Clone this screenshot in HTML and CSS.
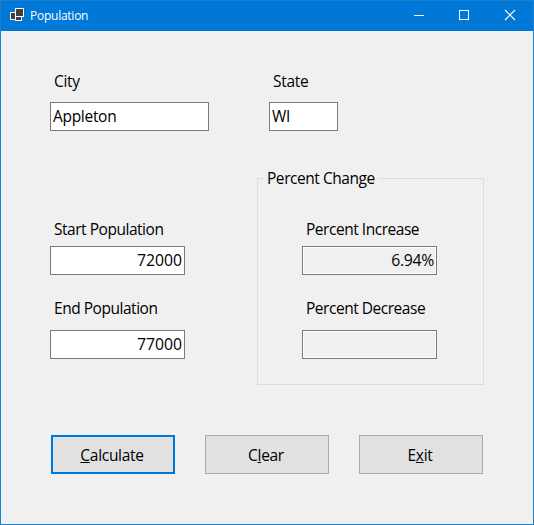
FILE: index.html
```html
<!DOCTYPE html>
<html lang="en">
<head>
<meta charset="utf-8">
<title>Population</title>
<link rel="stylesheet" href="styles.css">
</head>
<body>
<div class="window">
  <header class="titlebar">
    <svg class="app-icon" width="15" height="14" viewBox="0 0 15 14" shape-rendering="crispEdges">
      <rect x="5.5" y="0.5" width="8" height="8" fill="#404040" stroke="#fff"/>
      <rect x="0.5" y="4.5" width="5" height="7" fill="#404040" stroke="#fff"/>
      <rect x="5.5" y="8.5" width="6" height="4" fill="#404040" stroke="#fff"/>
    </svg>
    <span class="title">Population</span>
    <div class="controls">
      <svg width="46" height="30" viewBox="0 0 46 30"><path d="M18 14.5h10" stroke="#fff"/></svg>
      <svg width="46" height="30" viewBox="0 0 46 30"><rect x="17.5" y="9.5" width="9" height="9" fill="none" stroke="#fff"/></svg>
      <svg width="46" height="30" viewBox="0 0 46 30"><path d="M17 9l10 10M27 9l-10 10" stroke="#fff" stroke-width="1.1"/></svg>
    </div>
  </header>
  <main class="form">
    <div class="place">
      <div class="field roomy city"><span class="label">City</span><div class="box">Appleton</div></div>
      <div class="field roomy state"><span class="label">State</span><div class="box">WI</div></div>
    </div>
    <div class="data">
      <div class="populations">
        <div class="field"><span class="label">Start Population</span><div class="box number">72000</div></div>
        <div class="field roomy"><span class="label">End Population</span><div class="box number">77000</div></div>
      </div>
      <fieldset class="group">
        <legend>Percent Change</legend>
        <div class="results">
          <div class="field"><span class="label">Percent Increase</span><div class="box number readonly">6.94%</div></div>
          <div class="field roomy"><span class="label">Percent Decrease</span><div class="box number readonly"></div></div>
        </div>
      </fieldset>
    </div>
    <div class="actions">
      <button class="default"><span><u>C</u>alculate</span></button>
      <button><span>C<u>l</u>ear</span></button>
      <button><span>E<u>x</u>it</span></button>
    </div>
  </main>
</div>
</body>
</html>
```
FILE: styles.css
```css
* { box-sizing: border-box; }
body {
  margin: 0;
  font: 15.5px/22px "Open Sans", sans-serif;
  letter-spacing: -0.3px;
  color: #000;
}
.window {
  width: 534px;
  height: 525px;
  border: 1px solid #1a80d0;
  background: #f0f0f0;
  overflow: hidden;
}
.titlebar {
  display: flex;
  align-items: center;
  height: 30px;
  padding-left: 9px;
  background: #0078d7;
  color: #fff;
}
.app-icon { margin: 0 5px 2px 0; }
.title { font-size: 12px; line-height: 16px; letter-spacing: -0.25px; }
.controls { display: flex; margin-left: auto; margin-right: -1px; }
.controls svg { display: block; }
.form { padding: 39px 49px 0; }
.place { display: flex; gap: 60px; }
.city { width: 159px; }
.state { width: 69px; }
.field { display: flex; flex-direction: column; gap: 5px; }
.field.roomy { gap: 10px; }
.label { padding: 1px 0 1px 4px; line-height: 20px; white-space: nowrap; }
.data .label { padding: 0 0 2px 4px; letter-spacing: -0.47px; }
.box {
  height: 29px;
  padding: 2px;
  border: 1px solid #7a7a7a;
  background: #fff;
  line-height: 23px;
}
.number { text-align: right; font-size: 15.75px; letter-spacing: 0; }
.readonly { background: #f0f0f0; box-shadow: inset 0 0 0 1px #fff; letter-spacing: -0.3px; }
.data { display: flex; margin-top: 37px; }
.populations, .results {
  display: flex;
  flex-direction: column;
  gap: 23px;
  width: 135px;
}
.populations { margin-top: 51px; }
.group {
  width: 227px;
  height: 217px;
  min-width: 0;
  margin: 0 0 0 72px;
  padding: 0 0 0 6px;
  border: 1px solid #dcdcdc;
}
legend { padding: 0 3px; line-height: 20px; letter-spacing: -0.45px; }
.results { margin: 31px 0 0 38px; }
.actions { display: flex; gap: 30px; margin: 50px 0 0 1px; }
button {
  width: 124px;
  height: 39px;
  padding: 1px 2px 0 0;
  border: 1px solid #adadad;
  background: #e1e1e1;
  font: inherit;
  letter-spacing: inherit;
  color: #000;
}
button.default { border: 2px solid #0078d7; }
u { text-underline-offset: 1px; text-decoration-thickness: 1px; text-decoration-skip-ink: none; }
```
